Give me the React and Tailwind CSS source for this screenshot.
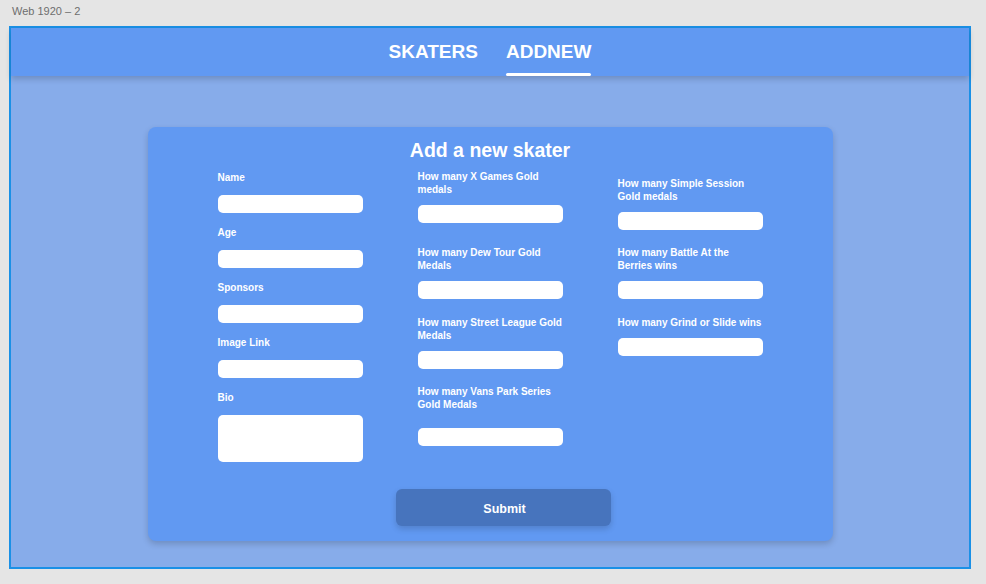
import React from 'react';

const colOne = [
  { label: 'Name', lt: 'mt-[3px]', it: 'mt-[11px]', h: 'h-[18px]' },
  { label: 'Age', lt: 'mt-[14px]', it: 'mt-[11px]', h: 'h-[18px]' },
  { label: 'Sponsors', lt: 'mt-[14px]', it: 'mt-[11px]', h: 'h-[18px]' },
  { label: 'Image Link', lt: 'mt-[14px]', it: 'mt-[11px]', h: 'h-[18px]' },
  { label: 'Bio', lt: 'mt-[14px]', it: 'mt-[11px]', h: 'h-[47px]' },
];

const colTwo = [
  { label: 'How many X Games Gold\nmedals', lt: 'mt-[1px]', it: 'mt-[9px]' },
  { label: 'How many Dew Tour Gold\nMedals', lt: 'mt-[23px]', it: 'mt-[9px]' },
  { label: 'How many Street League Gold\nMedals', lt: 'mt-[17px]', it: 'mt-[9px]' },
  { label: 'How many Vans Park Series\nGold Medals', lt: 'mt-[16px]', it: 'mt-[17px]' },
];

const colThree = [
  { label: 'How many Simple Session\nGold medals', lt: 'mt-[8px]', it: 'mt-[9px]' },
  { label: 'How many Battle At the\nBerries wins', lt: 'mt-[16px]', it: 'mt-[9px]' },
  { label: 'How many Grind or Slide wins', lt: 'mt-[17px]', it: 'mt-[9px]' },
];

function Field({ label, lt, it, h = 'h-[18px]', leading }) {
  return (
    <div className="flex flex-col">
      <span className={`${lt} ${leading} w-[160px] whitespace-pre-line text-[10px] font-bold text-white`}>
        {label}
      </span>
      <div className={`${it} ${h} w-[145px] rounded-[5px] bg-white`} />
    </div>
  );
}

export default function App() {
  return (
    <div className="w-[986px] h-[584px] bg-[#e5e5e5] overflow-hidden" style={{ fontFamily: '"Liberation Sans", Arial, sans-serif' }}>
      <div className="h-[26px] pl-[12px] pt-[5px] text-[11px] leading-[13px] text-[#6e6e6e]">Web 1920 – 2</div>

      <div className="ml-[9px] w-[962px] h-[543px] border-2 border-[#1a90e6] bg-[#87acea] flex flex-col">
        {/* top nav */}
        <div className="h-[48px] shrink-0 bg-[#6199f2] shadow-[0_3px_6px_rgba(0,0,0,0.18)] flex justify-center items-stretch gap-[28px]">
          <div className="flex items-center pt-[1px] text-[19px] font-bold text-white">SKATERS</div>
          <div className="relative flex items-center pt-[1px] text-[19px] font-bold text-white">
            ADDNEW
            <span className="absolute left-0 right-0 bottom-0 h-[3px] rounded-full bg-white" />
          </div>
        </div>

        {/* form card */}
        <div className="mt-[51px] mx-auto w-[685px] h-[414px] rounded-[8px] bg-[#6199f2] shadow-[0_3px_6px_rgba(0,0,0,0.18)] pt-[11px] flex flex-col">
          <h1 className="text-center text-[19.5px] leading-[24px] font-bold text-white">Add a new skater</h1>

          <div className="mt-[7px] h-[293px] flex justify-center gap-[55px]">
            <div className="w-[145px] flex flex-col">
              {colOne.map((f) => (
                <Field key={f.label} {...f} leading="leading-[12px]" />
              ))}
            </div>
            <div className="w-[145px] flex flex-col">
              {colTwo.map((f) => (
                <Field key={f.label} {...f} leading="leading-[13px]" />
              ))}
            </div>
            <div className="w-[145px] flex flex-col">
              {colThree.map((f) => (
                <Field key={f.label} {...f} leading="leading-[13px]" />
              ))}
            </div>
          </div>

          <button className="mt-[27px] ml-[248px] w-[215px] h-[37px] rounded-[6px] bg-[#4774bd] shadow-[0_3px_6px_rgba(0,0,0,0.16)] pt-[3px] pl-[3px] text-[12.5px] font-bold text-white">
            Submit
          </button>
        </div>
      </div>
    </div>
  );
}
